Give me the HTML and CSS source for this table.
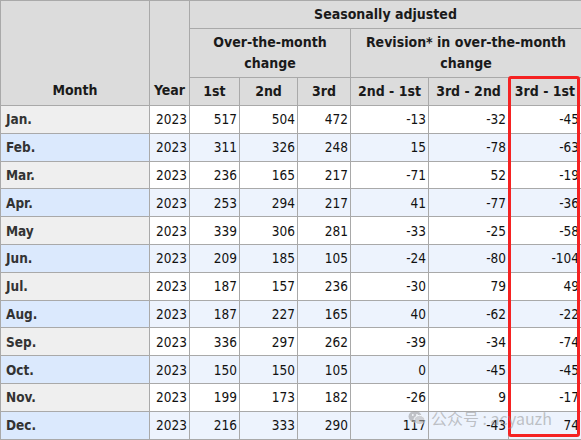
FILE: index.html
```html
<!DOCTYPE html>
<html>
<head>
<meta charset="utf-8">
<link rel="stylesheet" href="styles.css">
</head>
<body>
<div class="wrap">
<table class="data">
  <colgroup>
    <col class="c-month"><col class="c-year"><col class="c-1"><col class="c-2"><col class="c-3"><col class="c-21"><col class="c-32"><col class="c-31">
  </colgroup>
  <thead>
    <tr class="h1">
      <th rowspan="3" class="bottom">Month</th>
      <th rowspan="3" class="bottom">Year</th>
      <th colspan="6">Seasonally adjusted</th>
    </tr>
    <tr class="h2">
      <th colspan="3">Over-the-month<br>change</th>
      <th colspan="3">Revision* in over-the-month<br>change</th>
    </tr>
    <tr class="h3">
      <th>1st</th><th>2nd</th><th>3rd</th><th>2nd - 1st</th><th>3rd - 2nd</th><th>3rd - 1st</th>
    </tr>
  </thead>
  <tbody>
    <tr class="odd"><td class="m">Jan.</td><td>2023</td><td>517</td><td>504</td><td>472</td><td>-13</td><td>-32</td><td>-45</td></tr>
    <tr class="even"><td class="m">Feb.</td><td>2023</td><td>311</td><td>326</td><td>248</td><td>15</td><td>-78</td><td>-63</td></tr>
    <tr class="odd"><td class="m">Mar.</td><td>2023</td><td>236</td><td>165</td><td>217</td><td>-71</td><td>52</td><td>-19</td></tr>
    <tr class="even"><td class="m">Apr.</td><td>2023</td><td>253</td><td>294</td><td>217</td><td>41</td><td>-77</td><td>-36</td></tr>
    <tr class="odd"><td class="m">May</td><td>2023</td><td>339</td><td>306</td><td>281</td><td>-33</td><td>-25</td><td>-58</td></tr>
    <tr class="even"><td class="m">Jun.</td><td>2023</td><td>209</td><td>185</td><td>105</td><td>-24</td><td>-80</td><td>-104</td></tr>
    <tr class="odd"><td class="m">Jul.</td><td>2023</td><td>187</td><td>157</td><td>236</td><td>-30</td><td>79</td><td>49</td></tr>
    <tr class="even"><td class="m">Aug.</td><td>2023</td><td>187</td><td>227</td><td>165</td><td>40</td><td>-62</td><td>-22</td></tr>
    <tr class="odd"><td class="m">Sep.</td><td>2023</td><td>336</td><td>297</td><td>262</td><td>-39</td><td>-34</td><td>-74</td></tr>
    <tr class="even"><td class="m">Oct.</td><td>2023</td><td>150</td><td>150</td><td>105</td><td>0</td><td>-45</td><td>-45</td></tr>
    <tr class="odd"><td class="m">Nov.</td><td>2023</td><td>199</td><td>173</td><td>182</td><td>-26</td><td>9</td><td>-17</td></tr>
    <tr class="even"><td class="m">Dec.</td><td>2023</td><td>216</td><td>333</td><td>290</td><td>117</td><td>-43</td><td>74</td></tr>
  </tbody>
</table>
<div class="highlight"></div>
<div class="watermark">
  <svg class="wm-icon" width="18" height="16" viewBox="0 0 18 16">
    <ellipse cx="7" cy="6.5" rx="6.5" ry="5.5" fill="#9a9a9a"/>
    <ellipse cx="11.5" cy="10" rx="5.5" ry="4.6" fill="#b5b5b5" stroke="#fff" stroke-width="1"/>
    <circle cx="4.8" cy="5" r="0.9" fill="#fff"/>
    <circle cx="9" cy="5" r="0.9" fill="#fff"/>
  </svg>
  <span>公众号 : acyauzh</span>
</div>
</div>
</body>
</html>
```
FILE: styles.css
```css
html, body {
  margin: 0;
  padding: 0;
  background: #fff;
}
.wrap {
  position: relative;
  width: 581px;
  height: 440px;
  overflow: hidden;
}
.data {
  border-collapse: collapse;
  table-layout: fixed;
  width: 581px;
  font-family: "DejaVu Sans Condensed", "DejaVu Sans", sans-serif;
  font-size: 13.5px;
  color: #111;
}
.c-month { width: 149px; }
.c-year { width: 40px; }
.c-1 { width: 50px; }
.c-2 { width: 58px; }
.c-3 { width: 53px; }
.c-21 { width: 78px; }
.c-32 { width: 80px; }
.c-31 { width: 73px; }
.data th, .data td {
  border: 1px solid #a9a9a9;
  padding: 0 2px;
}
.data th {
  background: #dcdcdc;
  font-weight: bold;
  text-align: center;
  color: #1a1a1a;
  line-height: 21px;
  font-size: 14px;
}
.data th.bottom {
  vertical-align: bottom;
  padding-bottom: 4px;
}
.h1 { height: 28px; }
.h2 { height: 49px; }
.h3 { height: 28px; }
.data td {
  text-align: right;
  height: 26.8px;
  line-height: 16px;
}
.data td.m {
  text-align: left;
  padding-left: 5px;
  font-weight: bold;
  color: #333;
}
.odd td { background: #fff; }
.odd td.m { background: #efefef; }
.even td { background: #edf3fd; }
.even td.m { background: #dbe9fd; }
.highlight {
  position: absolute;
  left: 508px;
  top: 76px;
  width: 66px;
  height: 355px;
  border: 3px solid #f52222;
  border-radius: 3px;
}
.watermark {
  position: absolute;
  left: 408px;
  top: 406px;
  display: flex;
  align-items: center;
  gap: 5px;
  font-family: "Noto Sans CJK SC", "DejaVu Sans", sans-serif;
  font-size: 16px;
  color: rgba(140, 140, 140, 0.5);
}
.wm-icon { opacity: 0.55; }
```
